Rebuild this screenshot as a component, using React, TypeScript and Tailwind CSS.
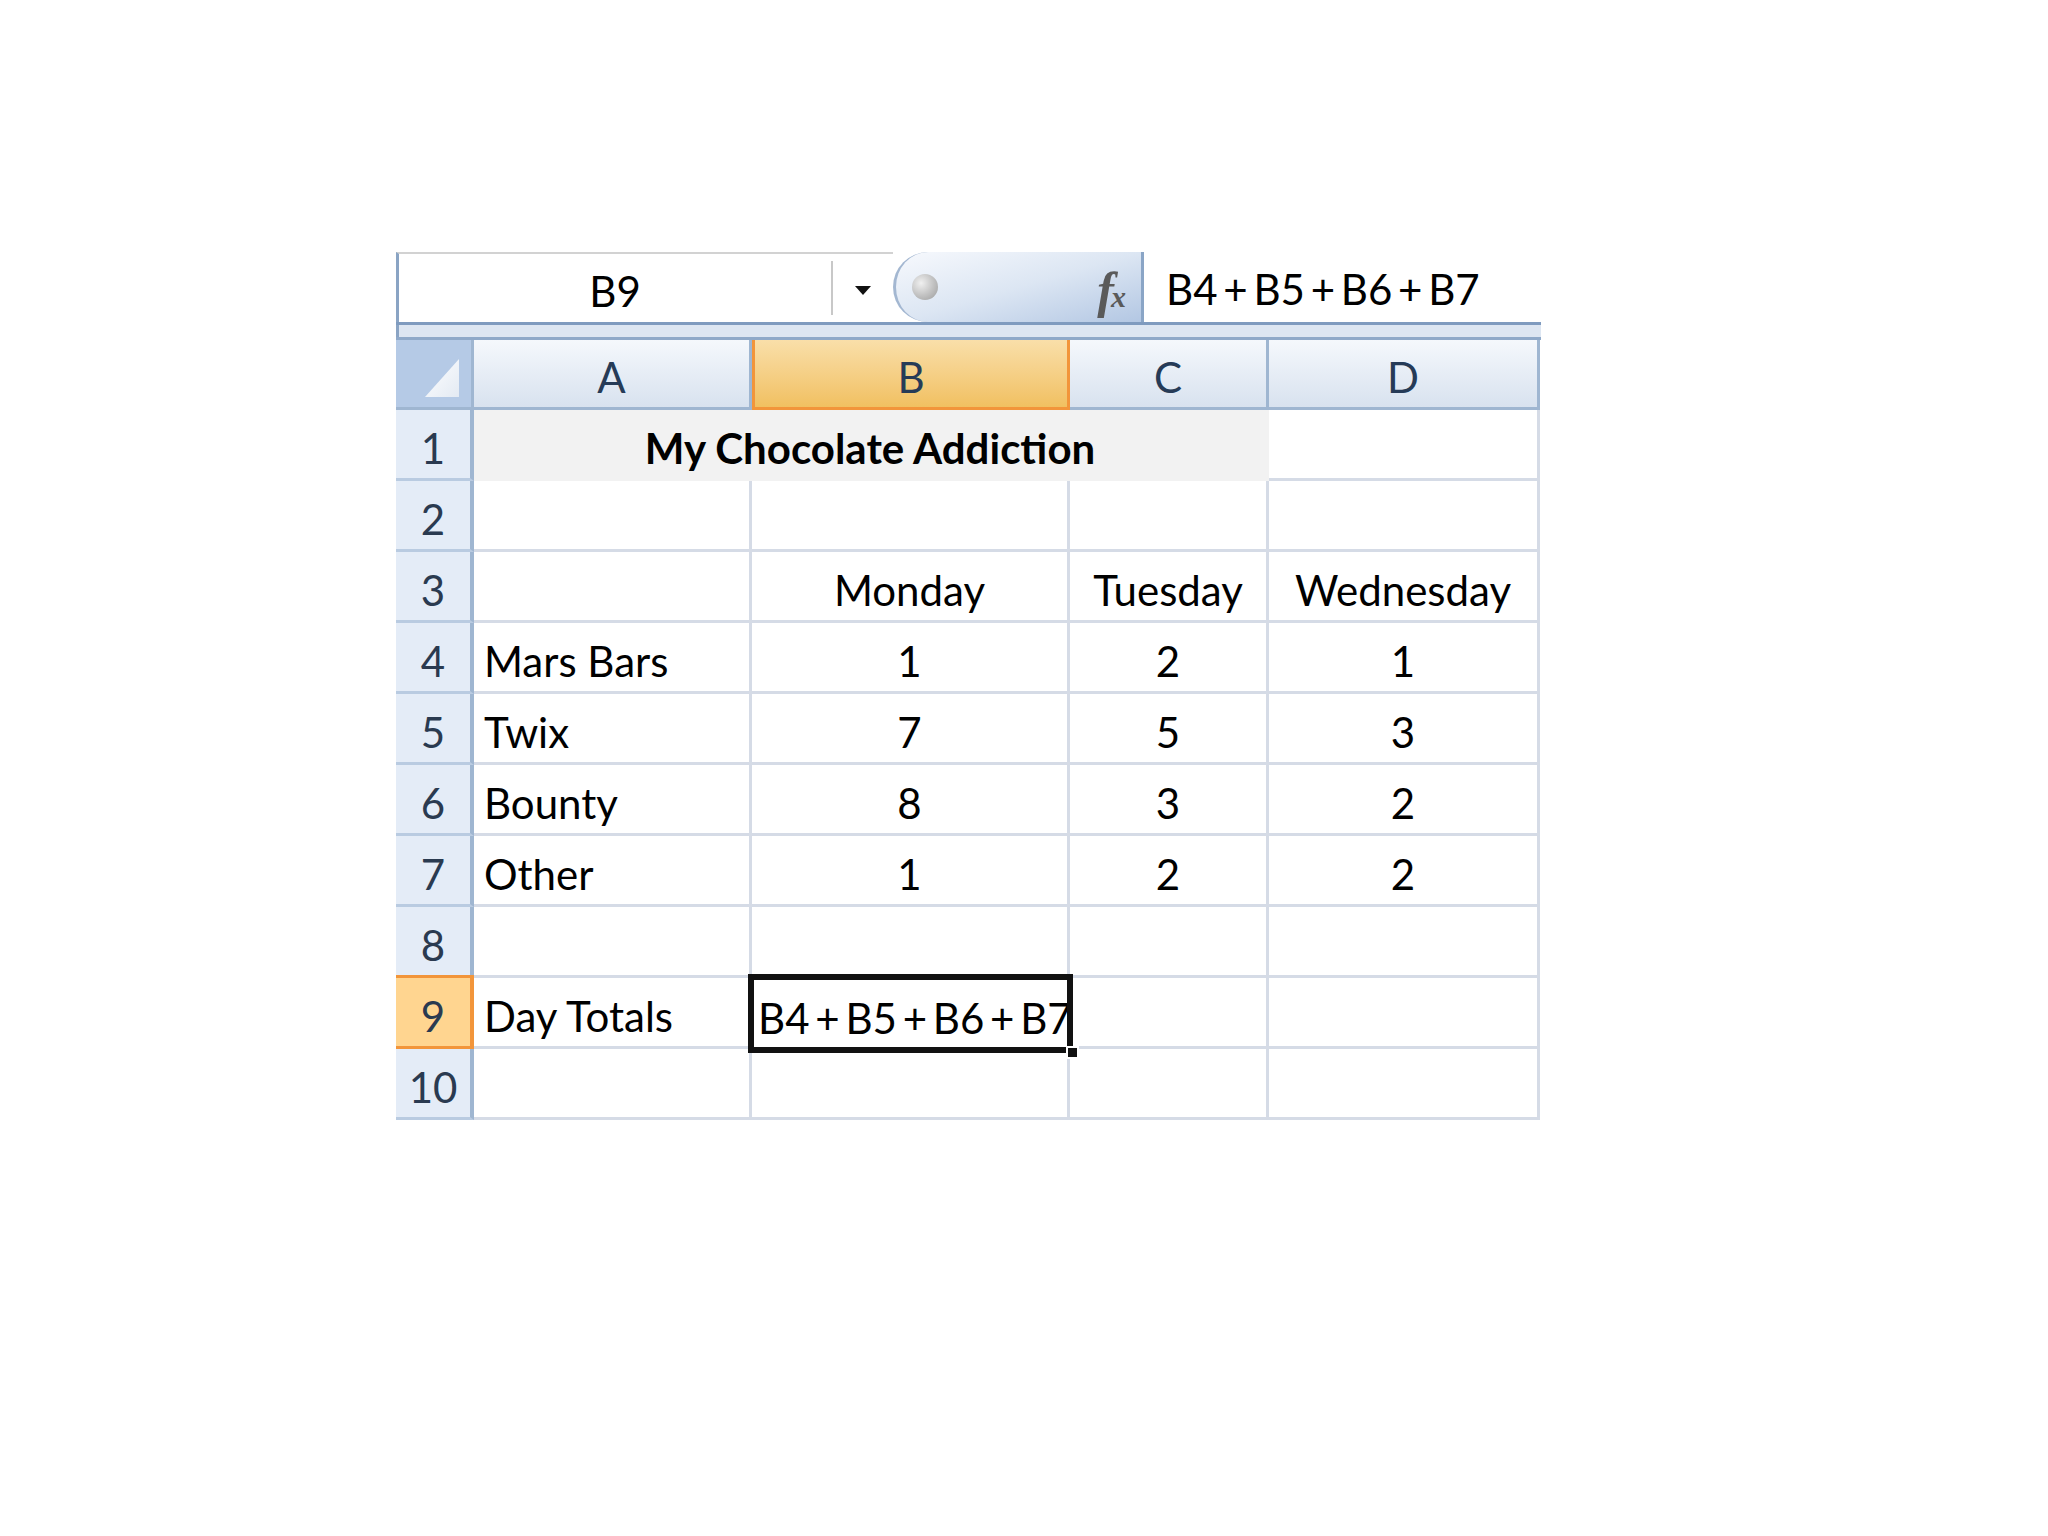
import React from 'react';

type Row = { n: number; a?: string; b?: string; c?: string; d?: string };

const rows: Row[] = [
  { n: 2 },
  { n: 3, b: 'Monday', c: 'Tuesday', d: 'Wednesday' },
  { n: 4, a: 'Mars Bars', b: '1', c: '2', d: '1' },
  { n: 5, a: 'Twix', b: '7', c: '5', d: '3' },
  { n: 6, a: 'Bounty', b: '8', c: '3', d: '2' },
  { n: 7, a: 'Other', b: '1', c: '2', d: '2' },
  { n: 8 },
  { n: 9, a: 'Day Totals' },
  { n: 10 },
];

const FormulaBar = () => (
  <div className="flex h-[73px] border-b-[3px] border-[#7f9bbf]">
    <div className="flex h-full items-center border-l-[3px] border-t-2 border-l-[#8aa4c4] border-t-[#d2d2d2] bg-white">
      <div className="w-[432px] pt-[6px] text-center text-[42px] leading-none text-black">B9</div>
      <div className="h-[54px] w-[2px] bg-[#c8c8c8]" />
      <div className="flex w-[60px] justify-center pt-[4px]">
        <svg width="18" height="11" viewBox="0 0 18 11">
          <polygon points="1,1 17,1 9,10" fill="#111" />
        </svg>
      </div>
    </div>
    <div className="relative flex h-full w-[248px] items-center justify-between rounded-l-[38px] border-l-[3px] border-[#a3b7d1] bg-linear-to-br from-[#f7f9fd] via-[#dce6f3] to-[#b3c7e3] pl-[16px] pr-[18px]">
      <div className="h-[26px] w-[26px] rounded-full bg-radial-[at_35%_35%] from-[#f0f0f0] via-[#c4c4c4] to-[#9a9a9a]" />
      <span className="pt-[6px] font-['Liberation_Serif',serif] text-[50px] font-bold italic leading-none tracking-[-3px] text-[#5a5a5a]">
        f<span className="text-[30px]">x</span>
      </span>
    </div>
    <div className="h-full w-[3px] bg-[#8aa5c6]" />
    <div className="flex h-full flex-1 items-center bg-white pl-[22px] pt-[4px] text-[42px] leading-none text-black [word-spacing:-5px]">
      B4 + B5 + B6 + B7
    </div>
  </div>
);

const cell = 'box-border flex h-full items-center border-r-[3px] border-b-[3px] border-[#d5dbe6] pt-[8px] text-[42px] leading-none text-black';

const Sheet = () => (
  <div>
    {/* column headers */}
    <div className="flex h-[73px] border-t-[3px] border-[#8fa9c9]">
      <div className="relative box-border h-full w-[78px] border-r-[3px] border-b-[3px] border-[#9fb6d1] bg-[#b5cae6]">
        <svg className="absolute bottom-[10px] right-[12px]" width="34" height="38" viewBox="0 0 34 38">
          <defs>
            <linearGradient id="tri" x1="0" y1="0" x2="1" y2="1">
              <stop offset="0" stopColor="#ffffff" />
              <stop offset="1" stopColor="#e3eaf3" />
            </linearGradient>
          </defs>
          <polygon points="34,0 34,38 0,38" fill="url(#tri)" />
        </svg>
      </div>
      <div className="box-border flex h-full w-[278px] items-center justify-center border-r-[3px] border-b-[3px] border-[#9fb6d1] bg-linear-to-b from-[#f5f8fc] to-[#d8e2ef] pt-[6px] text-[42px] leading-none text-[#263b57]">A</div>
      <div className="box-border flex h-full w-[318px] items-center justify-center border-x-[3px] border-b-[3px] border-[#f2953a] bg-linear-to-b from-[#f9dfa9] to-[#f1c060] pt-[6px] text-[42px] leading-none text-[#263b57]">B</div>
      <div className="box-border flex h-full w-[199px] items-center justify-center border-r-[3px] border-b-[3px] border-[#9fb6d1] bg-linear-to-b from-[#f5f8fc] to-[#d8e2ef] pt-[6px] text-[42px] leading-none text-[#263b57]">C</div>
      <div className="box-border flex h-full w-[271px] items-center justify-center border-r-[3px] border-b-[3px] border-[#9fb6d1] bg-linear-to-b from-[#f5f8fc] to-[#d8e2ef] pt-[6px] text-[42px] leading-none text-[#263b57]">D</div>
    </div>

    {/* row 1: merged title */}
    <div className="flex h-[71px]">
      <div className="box-border flex h-full w-[78px] items-center justify-center border-r-[4px] border-b-[3px] border-r-[#9fb6d1] border-b-[#b9cbe1] bg-[#e4ecf7] pt-[8px] text-[42px] leading-none text-[#2a3a50]">1</div>
      <div className="box-border flex h-full w-[795px] items-center justify-center border-r-[3px] border-b-[3px] border-[#f2f2f2] bg-[#f2f2f2] pt-[8px] text-[42px] font-bold leading-none text-black">
        My Chocolate Addiction
      </div>
      <div className={`${cell} w-[271px]`} />
    </div>

    {rows.map((r) => {
      const sel = r.n === 9;
      return (
        <div key={r.n} className="flex h-[71px]">
          <div
            className={
              sel
                ? 'box-border -mt-[3px] flex h-[74px] w-[78px] items-center justify-center border-y-[3px] border-r-[4px] border-[#f2953a] bg-[#ffd590] pt-[8px] text-[42px] leading-none text-[#2a3a50]'
                : 'box-border flex h-full w-[78px] items-center justify-center border-r-[4px] border-b-[3px] border-r-[#9fb6d1] border-b-[#b9cbe1] bg-[#e4ecf7] pt-[8px] text-[42px] leading-none text-[#2a3a50]'
            }
          >
            {r.n}
          </div>
          <div className={`${cell} w-[278px] pl-[10px]`}>{r.a}</div>
          <div className={`${cell} relative w-[318px] justify-center`}>
            {sel ? (
              <div className="absolute -left-[4px] -top-[4px] -right-[6px] -bottom-[7px] z-10 flex items-center overflow-hidden whitespace-nowrap border-[6px] border-[#111] bg-white pl-[4px] pt-[8px] [word-spacing:-5px]">
                B4 + B5 + B6 + B7
              </div>
            ) : (
              r.b
            )}
            {sel && (
              <div className="absolute -right-[12px] -bottom-[13px] z-20 h-[13px] w-[13px] border-2 border-white bg-[#111]" />
            )}
          </div>
          <div className={`${cell} w-[199px] justify-center`}>{r.c}</div>
          <div className={`${cell} w-[271px] justify-center`}>{r.d}</div>
        </div>
      );
    })}
  </div>
);

export default function App() {
  return (
    <div className="min-h-screen w-full bg-white pl-[396px] pt-[252px] font-['Lato',sans-serif]">
      <div className="w-[1145px]">
        <FormulaBar />
        <div className="h-[12px] border-l-[3px] border-[#8aa4c4] bg-[#dde6f2]" />
        <Sheet />
      </div>
    </div>
  );
}
